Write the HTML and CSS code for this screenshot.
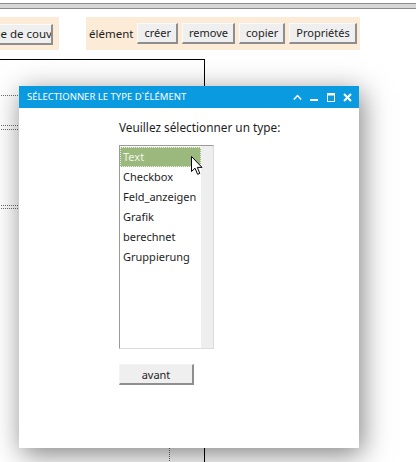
FILE: index.html
```html
<!DOCTYPE html>
<html>
<head>
<meta charset="utf-8">
<link rel="stylesheet" href="styles.css">
</head>
<body>
<div class="topstrip"></div>
<div class="toolbar">
  <div class="group group-first">
    <button class="btn btn-clip"><span class="clip-text">Page de couverture</span></button>
  </div>
  <div class="group group-elem">
    <span class="label">élément</span>
    <button class="btn">créer</button>
    <button class="btn">remove</button>
    <button class="btn">copier</button>
    <button class="btn">Propriétés</button>
  </div>
</div>
<div class="panel">
  <div class="row r1"></div>
  <div class="row r2"></div>
  <div class="row r3"></div>
  <div class="row r4"></div>
  <div class="row r5"></div>
  <div class="row r6"><div class="col"></div></div>
</div>

<div class="dialog">
  <div class="titlebar">
    <span class="title">Sélectionner le type d`élément</span>
    <div class="controls">
      <svg width="9" height="8" viewBox="0 0 9 8"><path d="M0.8 6.5 L4.5 2.6 L8.2 6.5" fill="none" stroke="#fff" stroke-width="1.5"/></svg>
      <svg width="8" height="8" viewBox="0 0 8 8"><rect x="0" y="6" width="8" height="2" fill="#fff"/></svg>
      <svg width="8" height="9" viewBox="0 0 8 9"><rect x="0.5" y="0.5" width="7" height="8" fill="none" stroke="#fff" stroke-width="1"/><rect x="0" y="0" width="8" height="2.5" fill="#fff"/></svg>
      <svg width="9" height="9" viewBox="0 0 9 9"><path d="M1 1 L8 8 M8 1 L1 8" stroke="#fff" stroke-width="2"/></svg>
    </div>
  </div>
  <div class="content">
    <p class="prompt">Veuillez sélectionner un type:</p>
    <div class="listbox">
      <ul class="items">
        <li class="item selected">Text</li>
        <li class="item">Checkbox</li>
        <li class="item">Feld_anzeigen</li>
        <li class="item">Grafik</li>
        <li class="item">berechnet</li>
        <li class="item">Gruppierung</li>
      </ul>
      <div class="scroll"></div>
    </div>
    <button class="btn-next">avant</button>
  </div>
</div>

<svg class="cursor" width="13" height="20" viewBox="0 0 13 20">
  <path d="M0.5 0.5 L0.5 15.5 L4 12.2 L6.6 18.3 L8.8 17.4 L6.3 11.4 L11 11.4 Z" fill="#fff" stroke="#000" stroke-width="1" stroke-linejoin="round"/>
</svg>
</body>
</html>
```

FILE: styles.css
```css
html, body {
  margin: 0;
  padding: 0;
  width: 416px;
  height: 462px;
  overflow: hidden;
  background: #fff;
  font-family: "Noto Sans", "Open Sans", sans-serif;
  color: #1e1e1e;
}

.topstrip {
  margin-top: 3px;
  height: 4px;
  background: #d6d6d6;
  border-top: 1px solid #8c8c8c;
  border-bottom: 1px solid #8c8c8c;
}

.toolbar {
  display: flex;
  margin-top: 8px;
  height: 33px;
  gap: 27px;
}

.group {
  display: flex;
  align-items: center;
  background: #fbebd7;
  height: 33px;
  box-sizing: border-box;
}

.group-first {
  width: 59px;
  overflow: hidden;
  justify-content: flex-end;
  padding-right: 6px;
}

.group-elem {
  padding: 0 3px 0 3px;
  gap: 4px;
}

.label {
  font-size: 11.5px;
  margin-right: 0;
  color: #1e1e1e;
}

.btn {
  height: 21px;
  box-sizing: border-box;
  font-family: "Noto Sans", sans-serif;
  font-size: 11px;
  color: #1e1e1e;
  background: #efefef;
  border-style: solid;
  border-width: 1px 2px 2px 1px;
  border-color: #fafafa #8e8e8e #8e8e8e #fafafa;
  padding: 0 5px 1px 6px;
  margin: 0;
  line-height: 17px;
  flex-shrink: 0;
}

.btn-clip {
  width: 80px;
  margin-top: 1px;
  overflow: hidden;
  text-align: left;
  padding-left: 6px;
  white-space: nowrap;
}

.clip-text {
  font-size: 11.5px;
}

.panel {
  margin-top: 9px;
  margin-left: -10px;
  width: 215px;
  height: 420px;
  box-sizing: border-box;
  border: 1px solid #000;
  background: #fff;
}

.row {
  border-bottom: 1px dotted #6f6f6f;
}
.r1 { height: 35px; }
.r2 { height: 29px; }
.r3 { height: 3px; }
.r4 { height: 75px; }
.r5 { height: 2px; }
.r6 { border-bottom: none; height: 260px; }
.col {
  width: 178px;
  height: 100%;
  border-right: 1px dotted #6f6f6f;
}

.dialog {
  position: absolute;
  left: 19px;
  top: 86px;
  width: 340px;
  height: 362px;
  background: #fff;
  box-shadow: 3px 6px 26px rgba(0, 0, 0, 0.5);
  display: flex;
  flex-direction: column;
}

.titlebar {
  height: 22px;
  background: #0a9ae0;
  display: flex;
  align-items: center;
  justify-content: space-between;
  padding: 0 7px 0 8px;
}

.title {
  color: #fff;
  font-size: 9.5px;
  text-transform: uppercase;
  margin-top: -1px;
}

.controls {
  display: flex;
  align-items: center;
  gap: 8.5px;
}

.content {
  padding: 12px 0 0 100px;
  display: flex;
  flex-direction: column;
  align-items: flex-start;
}

.prompt {
  margin: 0;
  font-size: 11.8px;
  line-height: 14px;
  color: #1e1e1e;
}

.listbox {
  margin-top: 11px;
  width: 95px;
  height: 204px;
  box-sizing: border-box;
  border: 1px solid #9a9a9a;
  border-right-color: #dcdcdc;
  border-bottom-color: #dcdcdc;
  display: flex;
}

.items {
  list-style: none;
  margin: 0;
  padding: 1px 0 0 0;
  flex: 1;
}

.item {
  height: 20px;
  line-height: 20px;
  font-size: 11px;
  padding-left: 3px;
  color: #1e1e1e;
}

.item.selected {
  background: #9bb97c;
  color: #eef4e6;
  outline: 1px dotted #e6f0dc;
  outline-offset: -1px;
}

.scroll {
  width: 12px;
  background: #eeeeee;
}

.btn-next {
  margin-top: 15px;
  width: 75px;
  height: 21px;
  box-sizing: border-box;
  background: #efefef;
  border-style: solid;
  border-width: 1px 2px 2px 1px;
  border-color: #f4f4f4 #8e8e8e #8e8e8e #f4f4f4;
  font-family: "Noto Sans", sans-serif;
  font-size: 11px;
  color: #1e1e1e;
  padding: 0;
  line-height: 17px;
}

.cursor {
  position: absolute;
  left: 191px;
  top: 156px;
}
```
